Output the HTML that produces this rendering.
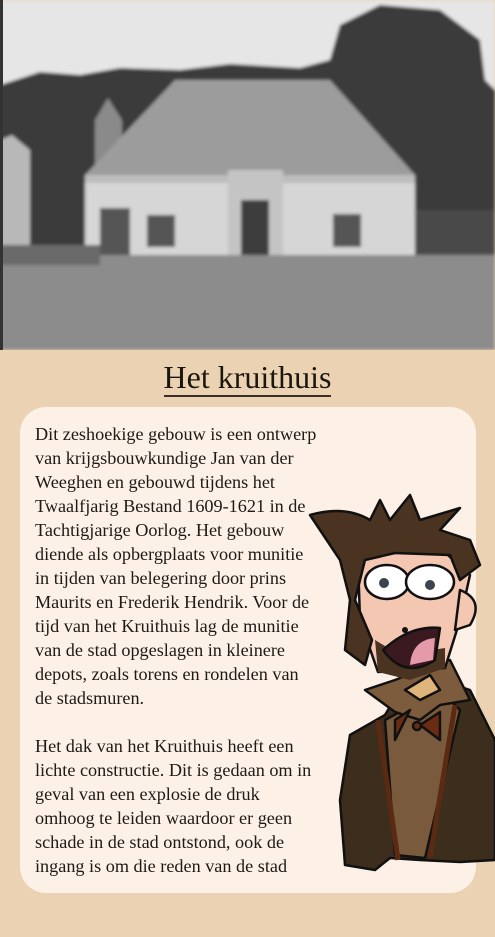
<!DOCTYPE html>
<html><head><meta charset="utf-8"><style>
body{margin:0;width:495px;height:937px;background:#ead2b2;overflow:hidden;position:relative;font-family:"Liberation Serif",serif}
.title{position:absolute;top:358px;left:0;width:495px;text-align:center;font-size:32px;line-height:38px;color:#1c1610}
.title span{border-bottom:2px solid #3a3028}
.card{position:absolute;left:20px;top:407px;width:456px;height:486px;background:#fcf0e7;border-radius:26px}
.txt{position:absolute;left:35px;top:422px;width:320px;font-size:18.2px;line-height:24px;color:#1e1a16;white-space:nowrap}
</style></head><body>
<svg width="495" height="350" style="position:absolute;left:0;top:0">
<defs><filter id="b"><feGaussianBlur stdDeviation="1.5"/></filter></defs>
<g filter="url(#b)">
<rect width="495" height="350" fill="#e6e6e6"/>
<path d="M0 85 L40 72 L80 75 L120 68 L180 70 L230 64 L300 68 L330 60 L340 25 L380 5 L440 10 L480 40 L485 80 L495 90 L495 260 L0 260Z" fill="#3a3a3a"/>
<path d="M0 140 L12 135 L30 150 L30 245 L0 245Z" fill="#b8b8b8"/>
<path d="M95 120 L108 98 L122 120 L122 175 L95 175Z" fill="#8a8a8a"/>
<polygon points="175,80 330,80 415,175 85,175" fill="#9c9c9c"/>
<rect x="85" y="175" width="330" height="80" fill="#d6d6d6"/>
<rect x="85" y="175" width="330" height="8" fill="#bdbdbd"/>
<rect x="228" y="170" width="55" height="85" fill="#c4c4c4"/>
<rect x="241" y="200" width="28" height="55" fill="#3c3c3c"/>
<rect x="147" y="215" width="28" height="32" fill="#555"/>
<rect x="333" y="214" width="28" height="33" fill="#555"/>
<rect x="100" y="208" width="30" height="50" fill="#555"/>
<rect x="415" y="210" width="80" height="45" fill="#4a4a4a"/>
<rect x="0" y="255" width="495" height="95" fill="#8c8c8c"/>
<rect x="0" y="245" width="100" height="20" fill="#6a6a6a"/>
</g>
<rect x="0" y="0" width="3" height="350" fill="#333"/>
</svg>
<div class="title"><span>Het kruithuis</span></div>
<div class="card"></div>
<div class="txt">Dit zeshoekige gebouw is een ontwerp<br>van krijgsbouwkundige Jan van der<br>Weeghen en gebouwd tijdens het<br>Twaalfjarig Bestand 1609-1621 in de<br>Tachtigjarige Oorlog. Het gebouw<br>diende als opbergplaats voor munitie<br>in tijden van belegering door prins<br>Maurits en Frederik Hendrik. Voor de<br>tijd van het Kruithuis lag de munitie<br>van de stad opgeslagen in kleinere<br>depots, zoals torens en rondelen van<br>de stadsmuren.<br><br>Het dak van het Kruithuis heeft een<br>lichte constructie. Dit is gedaan om in<br>geval van een explosie de druk<br>omhoog te leiden waardoor er geen<br>schade in de stad ontstond, ook de<br>ingang is om die reden van de stad</div>
<svg width="495" height="937" style="position:absolute;left:0;top:0" stroke="#111" stroke-width="2.5" stroke-linejoin="round">
<path d="M345 865 L340 800 L350 735 L385 715 L400 690 L440 680 L470 690 L495 740 L495 860 L460 862 L420 860 L390 858 L375 870Z" fill="#3d2d1c"/>
<path d="M385 720 L395 855 L425 858 L460 710 L440 690 Z" fill="#7a5a3c"/>
<path d="M365 690 L395 680 L420 670 L450 660 L470 700 L440 705 L420 720 L395 712Z" fill="#7d5c3e"/>
<path d="M405 690 L430 675 L440 690 L420 700Z" fill="#deb47a"/>
<path d="M395 720 L410 710 L395 740Z M420 725 L440 712 L440 740Z" fill="#6a2c12"/>
<circle cx="417" cy="726" r="4" fill="#6a2c12"/>
<path d="M378 720 L398 860 M455 705 L430 858" stroke="#5a2a12" stroke-width="5"/>
<path d="M358 560 L360 620 L378 672 L445 668 L460 620 L470 575 L440 548 L390 550Z" fill="#f3c7b2"/>
<path d="M460 590 Q485 600 470 625 L455 630Z" fill="#f3c7b2"/>
<path d="M310 515 Q345 505 370 520 L380 500 L390 520 L410 495 L420 520 L460 508 L440 530 L470 540 L480 565 L460 580 L450 555 L395 553 L365 560 L355 600 L372 640 L365 665 L345 650 L350 600 L340 560 Z" fill="#4a3320"/>
<path d="M378 672 L375 640 L400 655 L445 648 L445 668 L410 680Z" fill="#4a3320" stroke="none"/>
<ellipse cx="387" cy="582" rx="22" ry="17" fill="#fff"/>
<ellipse cx="430" cy="582" rx="24" ry="17" fill="#fff"/>
<circle cx="384" cy="583" r="5" fill="#3d4450" stroke="none"/>
<circle cx="430" cy="585" r="5" fill="#3d4450" stroke="none"/>
<circle cx="405" cy="630" r="3" fill="#111" stroke="none"/>
<path d="M383 650 Q410 625 440 628 L435 660 Q405 680 383 650Z" fill="#3a1a20"/>
<path d="M410 665 Q412 640 435 638 L433 660Z" fill="#e49aa8" stroke="none"/>
</svg>
</body></html>
